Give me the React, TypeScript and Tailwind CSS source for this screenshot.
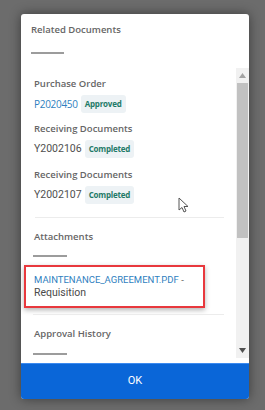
import React from "react";

const font = { fontFamily: '"Open Sans", "Noto Sans", sans-serif' };
const roboto = { fontFamily: "Roboto, Arial, sans-serif" };

function Badge({ label }: { label: string }) {
  return (
    <span className="ml-[3px] inline-flex h-[18px] items-center rounded-[3px] bg-[#edf2f5] px-[4px] text-[8px] font-bold tracking-[-0.2px] text-[#1f7a68]">
      {label}
    </span>
  );
}

function DocGroup({
  title,
  id,
  status,
  link,
  className,
}: {
  title: string;
  id: string;
  status: string;
  link?: boolean;
  className?: string;
}) {
  return (
    <div className={className}>
      <div className="flex h-[20px] items-center pl-[10px] text-[9.5px] font-semibold text-[#666]">{title}</div>
      <div className="flex h-[20px] items-center pl-[10px]">
        {link ? (
          <span className="text-[10px] tracking-[-0.3px] text-[#2f7fc0]">{id}</span>
        ) : (
          <span className="text-[10.5px] text-[#4f4f4f]" style={roboto}>
            {id}
          </span>
        )}
        <Badge label={status} />
      </div>
    </div>
  );
}

function Scrollbar() {
  return (
    <div className="flex h-full w-[13px] flex-col bg-[#f1f1f1]">
      <div className="flex h-[15px] items-center justify-center">
        <svg width="7" height="5" viewBox="0 0 7 5">
          <path d="M0 5 L3.5 0 L7 5 Z" fill="#a3a3a3" />
        </svg>
      </div>
      <div className="mx-[1px] h-[155px] bg-[#c1c1c1]" />
      <div className="flex-1" />
      <div className="flex h-[15px] items-center justify-center">
        <svg width="7" height="5" viewBox="0 0 7 5">
          <path d="M0 0 L7 0 L3.5 5 Z" fill="#505050" />
        </svg>
      </div>
    </div>
  );
}

export default function App() {
  return (
    <div className="h-[410px] w-[265px] overflow-hidden bg-[#6c6c6c] pl-[21px] pt-[14px]" style={font}>
      <div className="relative flex h-[385px] w-[228px] flex-col overflow-hidden rounded-[3px] bg-white shadow-[0_0_12px_rgba(0,0,0,0.45)]">
        {/* header */}
        <div className="h-[54px] px-[10px] pt-[9px]">
          <div className="text-[9.5px] font-semibold text-[#666]">Related Documents</div>
          <div className="mt-[15px] h-[2px] w-[33px] bg-[#9c9c9c]" />
        </div>

        {/* scrolling body */}
        <div className="flex h-[290px]">
          <div className="flex-1 overflow-hidden pl-[3px] pt-[6px]">
            <DocGroup title="Purchase Order" id="P2020450" status="Approved" link />
            <DocGroup className="mt-[5px]" title="Receiving Documents" id="Y2002106" status="Completed" />
            <DocGroup className="mt-[6px]" title="Receiving Documents" id="Y2002107" status="Completed" />

            <div className="ml-[11px] mr-[12px] mt-[12px] h-px bg-[#ececec]" />

            <div className="mt-[9px] flex h-[20px] items-center pl-[10px] text-[9.5px] font-semibold text-[#666]">
              Attachments
            </div>
            <div className="ml-[9px] mt-[8px] h-[2px] w-[34px] bg-[#9c9c9c]" />

            <div className="mt-[8px] flex h-[43px] w-[181px] flex-col justify-center border-2 border-[#e8383d] pl-[8px] shadow-[0_2px_5px_rgba(0,0,0,0.3)]">
              <div className="text-[9.5px] leading-[12px] text-[#2f7fc0]" style={roboto}>
                MAINTENANCE_AGREEMENT.PDF <span className="text-[#5a5a5a]">-</span>
              </div>
              <div className="text-[10.5px] leading-[13px] text-[#4a4a4a]" style={roboto}>
                Requisition
              </div>
            </div>

            <div className="ml-[9px] mr-[12px] mt-[6px] h-px bg-[#ececec]" />

            <div className="mt-[9px] flex h-[20px] items-center pl-[10px] text-[9.5px] font-semibold text-[#666]">
              Approval History
            </div>
            <div className="ml-[9px] mt-[9px] h-[2px] w-[34px] bg-[#9c9c9c]" />
          </div>
          <Scrollbar />
        </div>

        <div className="h-[5px]" />

        {/* ok button */}
        <div
          className="flex h-[36px] items-center justify-center border-t border-[#3b8af0] bg-[#0a66d8] text-[11px] text-white"
          style={roboto}
        >
          OK
        </div>

        {/* mouse pointer */}
        <svg className="absolute left-[157px] top-[183px]" width="11" height="16" viewBox="0 0 11 16">
          <path d="M1 1 L1 13 L4 10.5 L6 15 L8 14 L6 9.5 L10 9.5 Z" fill="#fff" stroke="#555" strokeWidth="1" strokeLinejoin="round" />
        </svg>
      </div>
    </div>
  );
}
